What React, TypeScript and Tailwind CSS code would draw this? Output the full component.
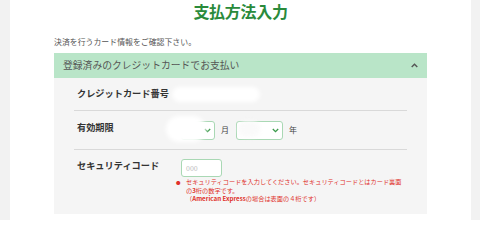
import React from 'react';

function ChevronDown() {
  return (
    <svg width="7" height="5" viewBox="0 0 7 5" className="shrink-0">
      <path d="M0.8 1 L3.5 3.7 L6.2 1" fill="none" stroke="#3a9a4a" strokeWidth="1.3" />
    </svg>
  );
}

function Select({ width }: { width: string }) {
  return (
    <div className={`${width} h-[19px] border border-[#a9d8b4] rounded-[3px] bg-white flex items-center justify-end pr-[3px]`}>
      <ChevronDown />
    </div>
  );
}

export default function App() {
  return (
    <div className="w-[480px] h-[220px] bg-[#f2f2f2] px-[10px] overflow-hidden font-['Noto_Sans_CJK_JP','Noto_Sans',sans-serif]">
      <div className="w-[461px] h-full bg-white px-[44px]">
        <h1 className="h-[22px] leading-[22px] text-[16px] font-bold text-[#2a8a3b] text-center tracking-[-0.3px]">
          支払方法入力
        </h1>
        <p className="mt-[14px] h-[12px] leading-[12px] text-[7.9px] text-[#555]">
          決済を行うカード情報をご確認下さい。
        </p>

        <div className="mt-[5px] h-[25px] bg-[#b9e5c8] flex items-center justify-between pl-[9px] pr-[9px]">
          <span className="text-[9.8px] text-[#555] leading-none">登録済みのクレジットカードでお支払い</span>
          <svg width="7" height="5" viewBox="0 0 7 5">
            <path d="M0.7 4 L3.5 1.2 L6.3 4" fill="none" stroke="#555" strokeWidth="1.4" />
          </svg>
        </div>

        <div className="h-[136px] bg-[#f5f5f5] px-[20px]">
          {/* カード番号 */}
          <div className="h-[33px] border-b border-[#d9d9d9] flex items-center pl-[3px]">
            <span className="w-[104px] text-[9.2px] font-bold text-[#333] leading-none">クレジットカード番号</span>
            <div className="-ml-[9px] w-[88px] h-[15px] rounded-full bg-white blur-[2px]" />
          </div>

          {/* 有効期限 */}
          <div className="relative h-[39px] border-b border-[#d9d9d9] flex items-center pl-[3px]">
            <span className="w-[104px] text-[9.2px] font-bold text-[#333] leading-none mb-[5px]">有効期限</span>
            <div className="flex items-center">
              <Select width="w-[34px]" />
              <span className="ml-[6px] text-[8px] text-[#444]">月</span>
              <div className="ml-[7px]">
                <Select width="w-[47px]" />
              </div>
              <span className="ml-[6px] text-[8px] text-[#444]">年</span>
            </div>
            <div className="absolute left-[92px] top-[5px] w-[40px] h-[26px] rounded-full bg-white blur-[2px]" />
            <div className="absolute left-[164px] top-[10px] w-[22px] h-[16px] rounded-full bg-[#fafafa] blur-[2px]" />
          </div>

          {/* セキュリティコード */}
          <div className="flex items-start pl-[3px] pt-[9px]">
            <span className="w-[104px] text-[9.2px] font-bold text-[#333] leading-[12px]">セキュリティコード</span>
            <div>
              <div className="w-[41px] h-[18px] border border-[#a9d8b4] rounded-[3px] bg-white flex items-center pl-[4px]">
                <span className="text-[7px] text-[#bbb]">000</span>
              </div>
              <div className="mt-[1px] -ml-[5px] flex text-[6.2px] leading-[8.7px] text-[#e0302a] whitespace-nowrap">
                <span className="w-[10px] shrink-0 text-[4.5px]">●</span>
                <div>
                  <div>セキュリティコードを入力してください。セキュリティコードとはカード裏面</div>
                  <div>の<b>3</b>桁の数字です。</div>
                  <div>（<b>American Express</b>の場合は表面の４桁です）</div>
                </div>
              </div>
            </div>
          </div>
        </div>
      </div>
    </div>
  );
}
